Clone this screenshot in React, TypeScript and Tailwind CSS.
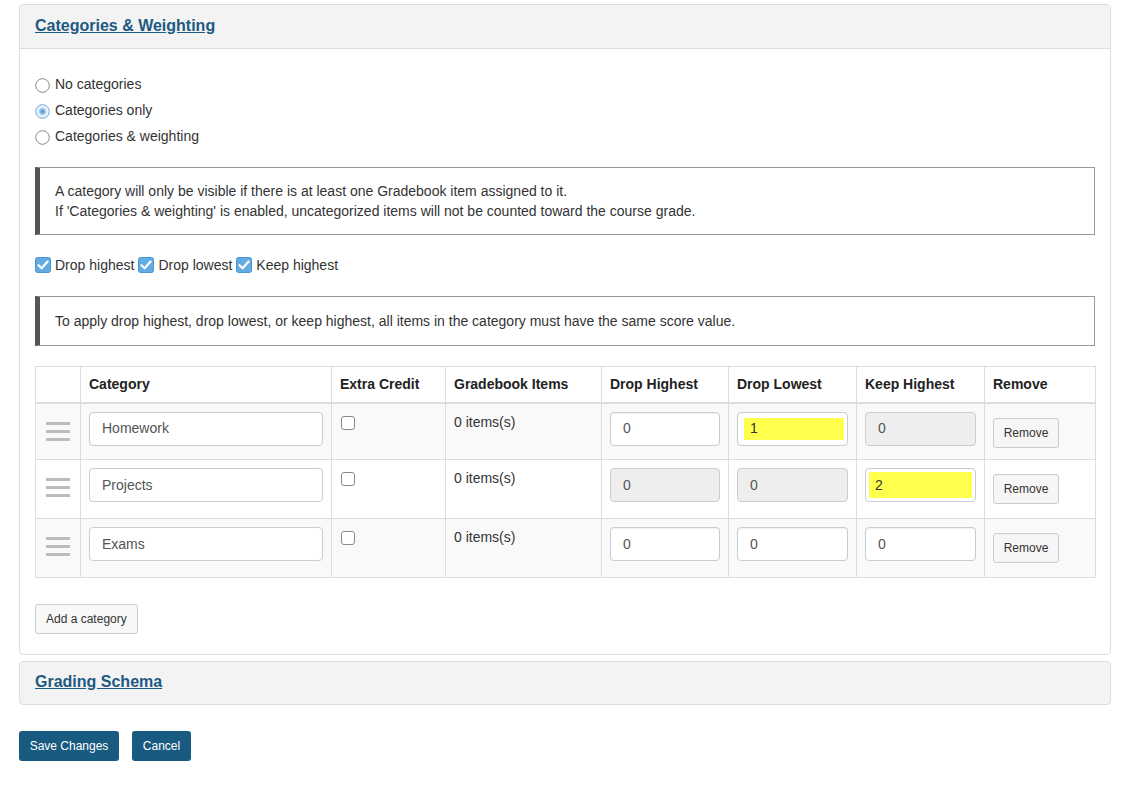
import React from "react";

const font = { fontFamily: '"Liberation Sans", Arial, sans-serif' };

const Radio = ({ checked }: { checked?: boolean }) => (
  <svg width="15" height="15" viewBox="0 0 15 15" className="mr-[4px] shrink-0">
    <defs>
      <radialGradient id="rg" cx="50%" cy="50%" r="50%">
        <stop offset="0%" stopColor="#3f8fd6" />
        <stop offset="60%" stopColor="#8cc0ec" />
        <stop offset="100%" stopColor="#e3f0fb" />
      </radialGradient>
    </defs>
    {checked ? (
      <>
        <circle cx="7.5" cy="7.5" r="6.8" fill="#e8f2fb" stroke="#6ea8d8" strokeWidth="1" />
        <circle cx="7.5" cy="7.5" r="4.2" fill="url(#rg)" />
      </>
    ) : (
      <circle cx="7.5" cy="7.5" r="6.8" fill="#fff" stroke="#8a8a8a" strokeWidth="1" />
    )}
  </svg>
);

const CheckedBox = () => (
  <svg width="16" height="16" viewBox="0 0 16 16" className="mr-[4px] shrink-0">
    <rect x="0.5" y="0.5" width="15" height="15" rx="2" fill="#63ace2" stroke="#4b95cf" />
    <path d="M3.5 8.2 L6.6 11.2 L12.6 4.6" fill="none" stroke="#fff" strokeWidth="2.2" strokeLinecap="round" strokeLinejoin="round" />
  </svg>
);

const EmptyBox = () => (
  <div className="w-[14px] h-[14px] border border-[#8a8a8a] rounded-[3px] bg-white" />
);

const Handle = () => (
  <div className="flex flex-col gap-[5px] w-[24px] mx-auto mt-[10px]">
    <div className="h-[3px] bg-[#bdbdbd]" />
    <div className="h-[3px] bg-[#bdbdbd]" />
    <div className="h-[3px] bg-[#bdbdbd]" />
  </div>
);

const NumInput = ({ value, disabled }: { value: string; disabled?: boolean }) => (
  <div
    className={`h-[34px] border border-[#ccc] rounded-[4px] flex items-center pl-[12px] text-[14px] text-[#555] ${
      disabled ? "bg-[#eeeeee]" : "bg-white shadow-[inset_0_1px_1px_rgba(0,0,0,0.06)]"
    }`}
  >
    {value}
  </div>
);

const YellowInput = ({ value, inset }: { value: string; inset: string }) => (
  <div className={`h-[34px] border border-[#ccc] rounded-[4px] bg-white flex ${inset}`}>
    <div className="flex-1 bg-[#ffff4d] flex items-center pl-[6px] text-[14px] text-[#333]">{value}</div>
  </div>
);

const RemoveBtn = () => (
  <button className="mt-[6px] h-[30px] w-[66px] border border-[#ccc] rounded-[3px] bg-[#f6f6f6] text-[12px] text-[#333]">
    Remove
  </button>
);

type Row = {
  name: string;
  h: string;
  bg: string;
  dh: React.ReactNode;
  dl: React.ReactNode;
  kh: React.ReactNode;
};

const rows: Row[] = [
  {
    name: "Homework",
    h: "h-[57px]",
    bg: "bg-[#f9f9f9]",
    dh: <NumInput value="0" />,
    dl: <YellowInput value="1" inset="pl-[6px] pr-[3px] py-[5px]" />,
    kh: <NumInput value="0" disabled />,
  },
  {
    name: "Projects",
    h: "h-[59px]",
    bg: "bg-white",
    dh: <NumInput value="0" disabled />,
    dl: <NumInput value="0" disabled />,
    kh: <YellowInput value="2" inset="px-[3px] py-[3px]" />,
  },
  {
    name: "Exams",
    h: "h-[59px]",
    bg: "bg-[#f9f9f9]",
    dh: <NumInput value="0" />,
    dl: <NumInput value="0" />,
    kh: <NumInput value="0" />,
  },
];

export default function App() {
  return (
    <div className="min-h-screen bg-white text-[#333] text-[14px] pt-[4px]" style={font}>
      <div className="ml-[19px] w-[1092px]">
        <div className="border border-[#ddd] rounded-[4px] overflow-hidden">
          <div className="h-[44px] bg-[#f3f3f3] border-b border-[#ddd] flex items-center px-[15px] pb-[2px]">
            <a className="text-[16px] font-bold text-[#1d5a82] underline">Categories &amp; Weighting</a>
          </div>
          <div className="px-[15px] pt-[22px] pb-[20px]">
            <div className="flex flex-col">
              {[
                ["No categories", false],
                ["Categories only", true],
                ["Categories & weighting", false],
              ].map(([label, c]) => (
                <div key={label as string} className="h-[26px] flex items-center">
                  <div className="mt-[3px]">
                    <Radio checked={c as boolean} />
                  </div>
                  <span className="ml-[1px]">{label}</span>
                </div>
              ))}
            </div>

            <div className="mt-[18px] border border-[#999] border-l-[5px] border-l-[#555] pt-[13px] pb-[13px] px-[15px] leading-[20px]">
              <div>A category will only be visible if there is at least one Gradebook item assigned to it.</div>
              <div>If 'Categories &amp; weighting' is enabled, uncategorized items will not be counted toward the course grade.</div>
            </div>

            <div className="mt-[20px] h-[20px] flex items-center">
              <CheckedBox />
              <span className="mr-[4px]">Drop highest</span>
              <CheckedBox />
              <span className="mr-[4px]">Drop lowest</span>
              <CheckedBox />
              <span>Keep highest</span>
            </div>

            <div className="mt-[21px] border border-[#999] border-l-[5px] border-l-[#555] pt-[14px] pb-[14px] px-[15px] leading-[20px]">
              To apply drop highest, drop lowest, or keep highest, all items in the category must have the same score value.
            </div>

            <table className="mt-[20px] w-[1060px] table-fixed border-collapse">
              <thead>
                <tr className="h-[36px] bg-white">
                  <th className="w-[45px] border border-[#ddd] border-b-2"></th>
                  <th className="w-[251px] border border-[#ddd] border-b-2 text-left px-[8px] font-bold text-[#222]">Category</th>
                  <th className="w-[114px] border border-[#ddd] border-b-2 text-left px-[8px] font-bold text-[#222]">Extra Credit</th>
                  <th className="w-[156px] border border-[#ddd] border-b-2 text-left px-[8px] font-bold text-[#222]">Gradebook Items</th>
                  <th className="w-[127px] border border-[#ddd] border-b-2 text-left px-[8px] font-bold text-[#222]">Drop Highest</th>
                  <th className="w-[128px] border border-[#ddd] border-b-2 text-left px-[8px] font-bold text-[#222]">Drop Lowest</th>
                  <th className="w-[128px] border border-[#ddd] border-b-2 text-left px-[8px] font-bold text-[#222]">Keep Highest</th>
                  <th className="w-[111px] border border-[#ddd] border-b-2 text-left px-[8px] font-bold text-[#222]">Remove</th>
                </tr>
              </thead>
              <tbody>
                {rows.map((r) => (
                  <tr key={r.name} className={`${r.h} ${r.bg}`}>
                    <td className="border border-[#ddd] align-top pt-[8px]">
                      <Handle />
                    </td>
                    <td className="border border-[#ddd] align-top pt-[8px] px-[8px]">
                      <div className="h-[34px] border border-[#ccc] rounded-[4px] bg-white flex items-center pl-[12px] text-[14px] text-[#555]">
                        {r.name}
                      </div>
                    </td>
                    <td className="border border-[#ddd] align-top pt-[12px] px-[9px]">
                      <EmptyBox />
                    </td>
                    <td className="border border-[#ddd] align-top pt-[8px] px-[8px] leading-[20px]">0 items(s)</td>
                    <td className="border border-[#ddd] align-top pt-[8px] px-[8px]">{r.dh}</td>
                    <td className="border border-[#ddd] align-top pt-[8px] px-[8px]">{r.dl}</td>
                    <td className="border border-[#ddd] align-top pt-[8px] px-[8px]">{r.kh}</td>
                    <td className="border border-[#ddd] align-top pt-[8px] px-[8px]">
                      <RemoveBtn />
                    </td>
                  </tr>
                ))}
              </tbody>
            </table>

            <button className="mt-[26px] h-[30px] px-[10px] border border-[#ccc] rounded-[3px] bg-[#f8f8f8] text-[12px] text-[#333]">
              Add a category
            </button>
          </div>
        </div>

        <div className="mt-[6px] h-[44px] bg-[#f3f3f3] border border-[#ddd] rounded-[4px] flex items-center px-[15px] pb-[2px]">
          <a className="text-[16px] font-bold text-[#1d5a82] underline">Grading Schema</a>
        </div>

        <div className="mt-[26px] flex gap-[13px]">
          <button className="h-[30px] w-[100px] rounded-[3px] bg-[#185a80] text-white text-[12px]">Save Changes</button>
          <button className="h-[30px] w-[59px] rounded-[3px] bg-[#185a80] text-white text-[12px]">Cancel</button>
        </div>
      </div>
    </div>
  );
}
